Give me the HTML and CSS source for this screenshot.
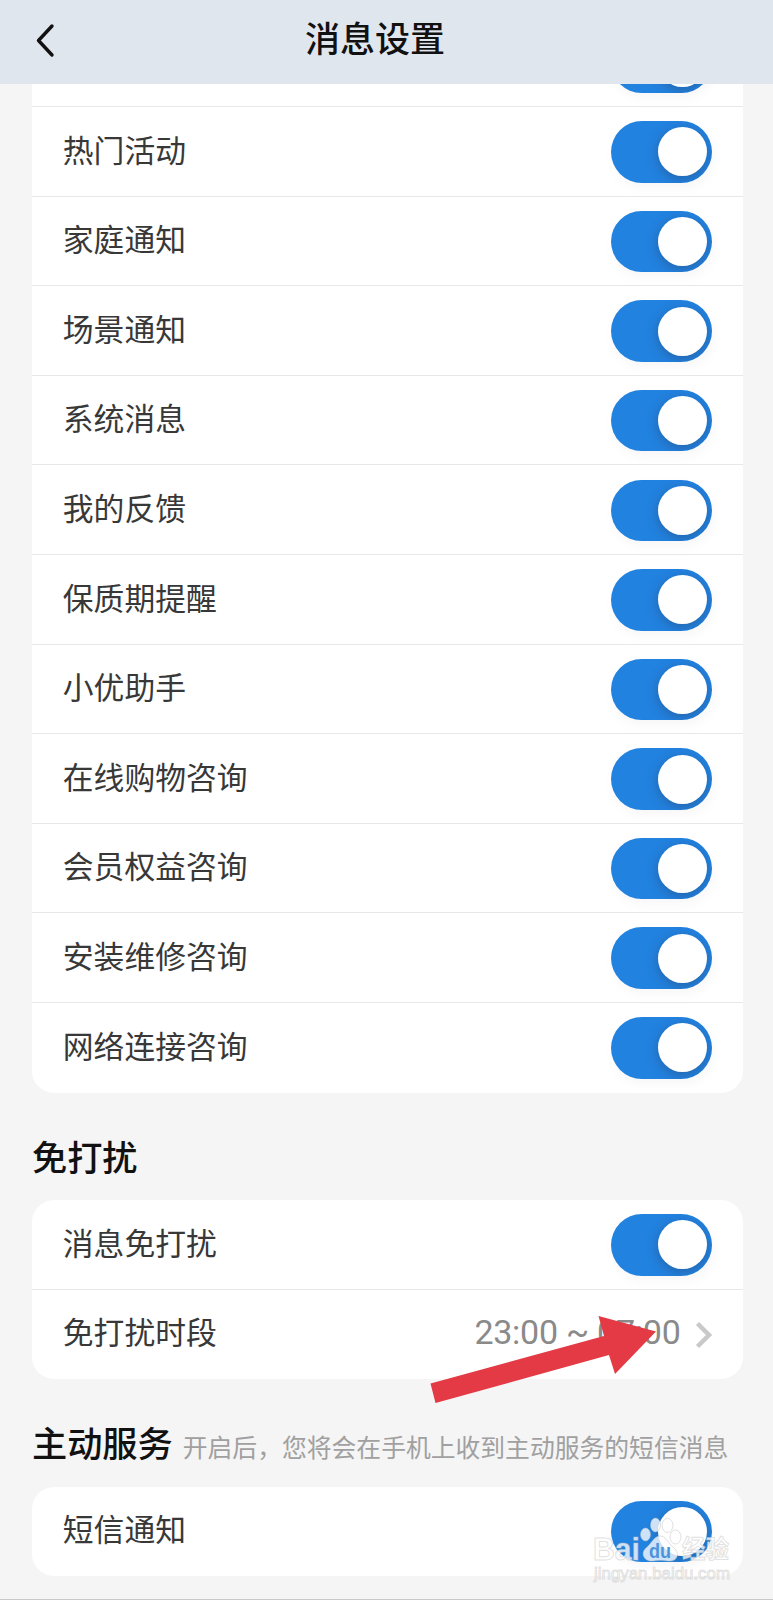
FILE: index.html
```html
<!DOCTYPE html>
<html lang="zh-CN">
<head>
<meta charset="utf-8">
<title>消息设置</title>
<link rel="stylesheet" href="styles.css">
</head>
<body>
<div class="screen">
  <header class="bar">
    <svg class="back" width="24" height="36" viewBox="0 0 24 36"><path d="M19 4 L5.500 18.500 L19 33"/></svg>
    <h1 class="title">消息设置</h1>
  </header>
  <main class="content">
    <section class="card card-first">
      <div class="row"><span class="label"></span><i class="toggle"></i></div>
      <div class="row"><span class="label">热门活动</span><i class="toggle"></i></div>
      <div class="row"><span class="label">家庭通知</span><i class="toggle"></i></div>
      <div class="row"><span class="label">场景通知</span><i class="toggle"></i></div>
      <div class="row"><span class="label">系统消息</span><i class="toggle"></i></div>
      <div class="row"><span class="label">我的反馈</span><i class="toggle"></i></div>
      <div class="row"><span class="label">保质期提醒</span><i class="toggle"></i></div>
      <div class="row"><span class="label">小优助手</span><i class="toggle"></i></div>
      <div class="row"><span class="label">在线购物咨询</span><i class="toggle"></i></div>
      <div class="row"><span class="label">会员权益咨询</span><i class="toggle"></i></div>
      <div class="row"><span class="label">安装维修咨询</span><i class="toggle"></i></div>
      <div class="row"><span class="label">网络连接咨询</span><i class="toggle"></i></div>
    </section>
    <div class="heading"><h2 class="heading-text">免打扰</h2></div>
    <section class="card">
      <div class="row"><span class="label">消息免打扰</span><i class="toggle"></i></div>
      <div class="row">
        <span class="label">免打扰时段</span>
        <span class="value">23:00 ~ 07:00</span>
        <svg class="chevron" width="18" height="28" viewBox="0 0 18 28"><path d="M2.500 2.500 L14 14 L2.500 25.500"/></svg>
      </div>
    </section>
    <div class="heading"><h2 class="heading-text">主动服务</h2><span class="note">开启后，您将会在手机上收到主动服务的短信消息</span></div>
    <section class="card">
      <div class="row"><span class="label">短信通知</span><i class="toggle"></i></div>
    </section>
  </main>
  <svg class="arrow" width="230" height="92" viewBox="0 0 230 92"><path d="M0.500 67.500 L174 20 L168.500 0 L226 15.500 L185 58 L179 39 L5.500 87 Z"/></svg>
  <svg class="watermark" width="150" height="74" viewBox="0 0 150 74">
    <g class="mark">
      <text class="brand" x="3" y="44" textLength="47" lengthAdjust="spacingAndGlyphs">Bai</text>
      <ellipse cx="55.500" cy="18.500" rx="5" ry="6.500"/>
      <ellipse cx="65.500" cy="9" rx="5" ry="7"/>
      <ellipse cx="77.500" cy="9.500" rx="5.500" ry="7"/>
      <ellipse cx="85.500" cy="21" rx="5.500" ry="7"/>
      <path d="M70 20 C64 20 62 27 56 32 C50 37 54 46 63 45 Q70 43.500 78 45 C88 46 90 37 84 32 C78 27 76 20 70 20 Z"/>
      <text class="cjk" x="92" y="42" textLength="47" lengthAdjust="spacingAndGlyphs">经验</text>
      <text class="site" x="4" y="63" textLength="136" lengthAdjust="spacingAndGlyphs">jingyan.baidu.com</text>
    </g>
    <text class="du" x="59" y="41.500" textLength="22" lengthAdjust="spacingAndGlyphs">du</text>
  </svg>
</div>
</body>
</html>
```
FILE: styles.css
```css
* { box-sizing: border-box; }
body { margin: 0; background: #f5f5f5; font-family: "Noto Sans CJK SC", sans-serif; }
.screen { position: relative; width: 773px; height: 1600px; overflow: hidden; border-bottom: 1px solid #c9c9c9; display: flex; flex-direction: column; }
.bar { height: 84px; flex: none; background: #e0e6ed; display: grid; grid-template-columns: 90px 1fr 90px; align-items: center; z-index: 1; }
.back { margin: -4px 0 0 33px; fill: none; stroke: #111; stroke-width: 3.4; stroke-linecap: round; stroke-linejoin: round; }
.title { margin: -11px 0 0; padding-right: 23px; text-align: center; font-size: 35px; line-height: 50px; font-weight: 500; color: #111; }
.content { padding: 0 30px 0 32px; }
.card { background: #fff; border-radius: 22px; overflow: hidden; }
.card-first { margin-top: -66.500px; }
.row { height: 89.600px; padding: 1px 31px 0 31px; display: flex; align-items: center; border-bottom: 1px solid #e8e8e8; }
.row:last-child { border-bottom-color: transparent; }
.label { flex: 1; font-size: 30.800px; line-height: 44px; color: #383838; margin: -6.500px 0 0 -.2px; }
.toggle { position: relative; flex: none; width: 101.500px; height: 61.500px; border-radius: 31px; background: #2282e0; overflow: hidden; filter: drop-shadow(2px 5px 5px rgba(0, 0, 0, .03)); }
.toggle::after { content: ""; position: absolute; right: 5.500px; top: 6.300px; width: 49px; height: 49px; border-radius: 50%; background: #fff; box-shadow: 0 3px 12px rgba(40, 50, 80, .38); }
.heading { height: 107.500px; display: flex; align-items: baseline; padding-top: 37px; gap: 10px; }
.heading-text { margin: 0; font-size: 35.200px; line-height: 52px; font-weight: 500; color: #111; white-space: nowrap; }
.note { font-size: 24.800px; color: #a0a0a0; white-space: nowrap; }
.value { font-family: Roboto, sans-serif; font-size: 34px; color: #8a8a8a; letter-spacing: -.25px; margin: -5px 14.500px 0 0; white-space: nowrap; }
.chevron { fill: none; stroke: #c9c9c9; stroke-width: 4.500; flex: none; margin-right: -1px; }
.arrow { position: absolute; left: 430px; top: 1316px; fill: #e33a46; z-index: 2; }
.watermark { position: absolute; left: 590px; top: 1516px; z-index: 3; font-family: "Liberation Sans", sans-serif; }
.mark { fill: #fff; fill-opacity: .78; stroke: #bbb; stroke-opacity: .45; stroke-width: 1; }
.brand { font-size: 32px; font-weight: 700; }
.cjk { font-family: "Noto Sans CJK SC", sans-serif; font-size: 25px; font-weight: 700; }
.site { font-size: 17px; }
.du { font-size: 21px; font-weight: 700; fill: #4b93dc; }
```
